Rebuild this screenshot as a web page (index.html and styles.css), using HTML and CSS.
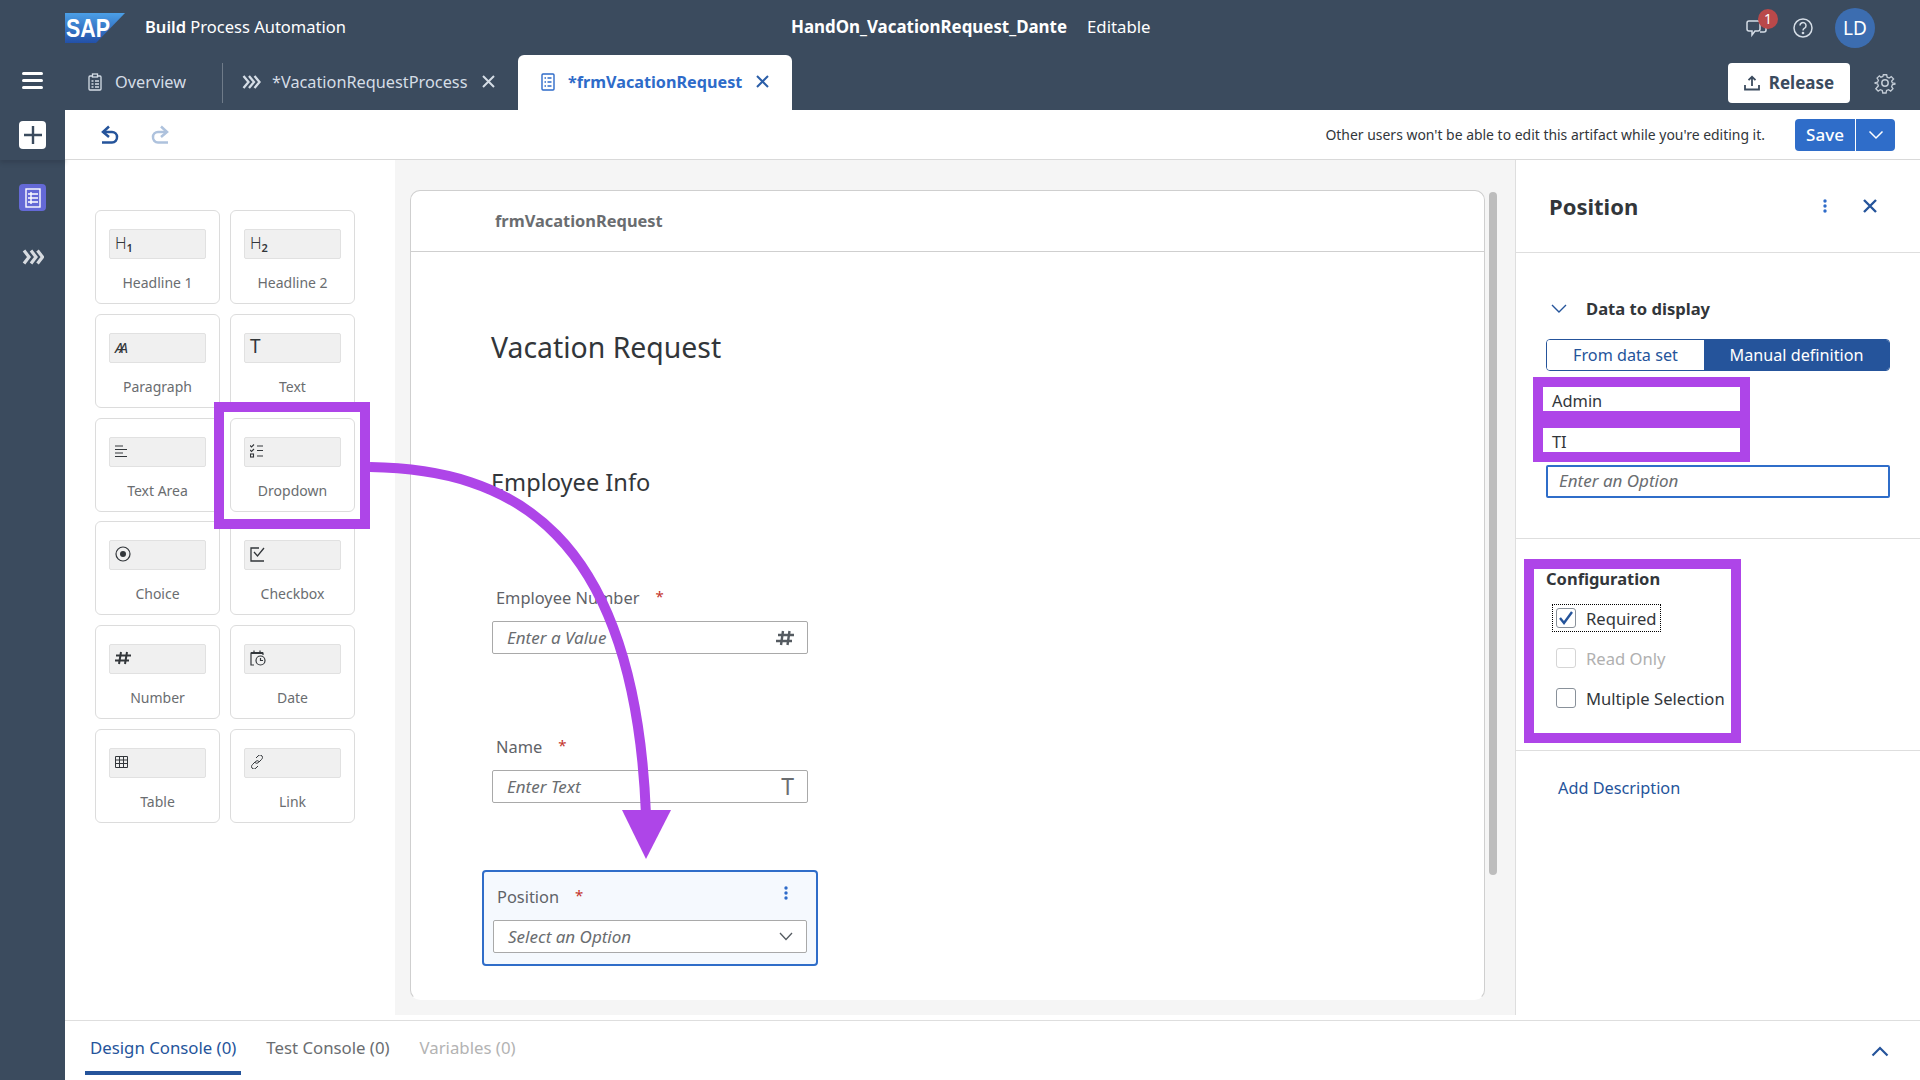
FILE: index.html
```html
<!DOCTYPE html>
<html lang="en">
<head>
<meta charset="utf-8">
<title>Build Process Automation</title>
<link rel="stylesheet" href="styles.css">
</head>
<body>
<div class="app">
  <header class="topbar">
    <div class="brand">
      <svg class="logo" width="60" height="30" viewBox="0 0 60 30">
        <defs><linearGradient id="sapg" x1="0" y1="0" x2="0" y2="1"><stop offset="0" stop-color="#4b9fe6"/><stop offset="1" stop-color="#2350a8"/></linearGradient></defs>
        <polygon points="0,0 60,0 31,30 0,30" fill="url(#sapg)"/>
        <text x="1" y="24" class="logo-text" textLength="44" lengthAdjust="spacingAndGlyphs">SAP</text>
      </svg>
      <span class="product"><b>Build</b> Process Automation</span>
    </div>
    <div class="doc-title"><b>HandOn_VacationRequest_Dante</b><span>Editable</span></div>
    <div class="top-actions">
      <span class="chat">
        <svg width="22" height="20" viewBox="0 0 22 20" fill="none" stroke="#d5dde6" stroke-width="1.5"><path d="M3 3h9a2 2 0 0 1 2 2v6a2 2 0 0 1-2 2H9l-3 4v-4H3a2 2 0 0 1-2-2V5a2 2 0 0 1 2-2z"/><path d="M14 6h4a2 2 0 0 1 2 2v4a2 2 0 0 1-2 2h-4"/></svg>
        <span class="badge">1</span>
      </span>
      <svg width="20" height="20" viewBox="0 0 20 20" fill="none" stroke="#d5dde6" stroke-width="1.5"><circle cx="10" cy="10" r="9"/><path d="M7 7.6a3 3 0 1 1 4.6 2.5c-1 .6-1.6 1.2-1.6 2.4"/><circle cx="10" cy="15" r=".6"/></svg>
      <span class="avatar">LD</span>
    </div>
  </header>

  <nav class="tabbar">
    <button class="burger" aria-label="Menu"><i></i><i></i><i></i></button>
    <div class="tabs">
      <div class="tab first">
        <svg width="14" height="18" viewBox="0 0 14 18" fill="none" stroke="#d5dde6" stroke-width="1.3"><rect x="1" y="3" width="12" height="14" rx="1"/><rect x="4.5" y="1" width="5" height="3" fill="#3b4b5e"/><path d="M3.5 8h2M7 8h4M3.5 11h2M7 11h4M3.5 14h2M7 14h4"/></svg>
        <span>Overview</span>
      </div>
      <span class="tab-sep"></span>
      <div class="tab second">
        <svg width="19" height="14" viewBox="0 0 19 14" fill="none" stroke="#d5dde6" stroke-width="2.3"><path d="M1.500 1l5 6-5 6M7 1l5 6-5 6M12.500 1l5 6-5 6"/></svg>
        <span>*VacationRequestProcess</span>
        <svg class="tab-x" width="13" height="13" viewBox="0 0 13 13" stroke="#d5dde6" stroke-width="2"><path d="M1 1l11 11M12 1L1 12"/></svg>
      </div>
      <div class="tab active">
        <svg width="14" height="18" viewBox="0 0 14 18" fill="none" stroke="#2e6bc9" stroke-width="1.400"><rect x="1" y="1" width="12" height="16" rx="1"/><path d="M3.500 5h1.500M6.500 5h4M3.500 9h1.500M6.500 9h4M3.500 13h1.500M6.500 13h4"/></svg>
        <span>*frmVacationRequest</span>
        <svg class="tab-x" width="13" height="13" viewBox="0 0 13 13" stroke="#2b5ea8" stroke-width="2"><path d="M1 1l11 11M12 1L1 12"/></svg>
      </div>
    </div>
    <div class="tab-actions">
      <button class="release">
        <svg width="16" height="16" viewBox="0 0 16 16" fill="none" stroke="#3b4b5e" stroke-width="1.800"><path d="M8 11V2M4.500 5.200L8 1.800l3.500 3.400M1 10v4.500h14V10"/></svg>
        Release
      </button>
      <svg width="22" height="22" viewBox="0 0 24 24" fill="none" stroke="#c3ccd6" stroke-width="1.600"><circle cx="12" cy="12" r="3.500"/><path d="M10 2h4l.6 3 2.400 1 2.600-1.700 2.800 2.800L20 9.700l1 2.300 3 .6v-1 1.800l-3 .6-1 2.400 1.700 2.600-2.800 2.800-2.600-1.700-2.400 1-.6 3h-4l-.6-3-2.400-1-2.600 1.700-2.800-2.800L4 15.400l-1-2.400-3-.6v-.8l3-.6 1-2.300-1.600-2.600 2.800-2.800L7 5l2.400-1z" transform="translate(1.200 1.200) scale(.9)"/></svg>
    </div>
  </nav>

  <div class="main">
    <aside class="rail">
      <div class="rail-top">
        <button class="rail-add" aria-label="Add">
          <svg width="20" height="20" viewBox="0 0 20 20" stroke="#3b4b5e" stroke-width="2.400"><path d="M10 1v18M1 10h18"/></svg>
        </button>
      </div>
      <button class="rail-form" aria-label="Forms">
        <svg width="16" height="20" viewBox="0 0 16 20" fill="none" stroke="#fff" stroke-width="1.400"><rect x="1" y="1" width="14" height="18"/><path d="M3 6h10M3 10h10M3 14h10M6 4v12"/></svg>
      </button>
      <button class="rail-proc" aria-label="Processes">
        <svg width="22" height="16" viewBox="0 0 22 16" fill="none" stroke="#d7dbe0" stroke-width="3.200"><path d="M2 1.500l5 6.500-5 6.500M9 1.500l5 6.500-5 6.500M15.500 1.500l5 6.500-5 6.500"/></svg>
      </button>
    </aside>

    <div class="workspace">
      <div class="toolbar">
        <svg class="undo" width="20" height="20" viewBox="0 0 20 20" fill="none" stroke="#25549b" stroke-width="2.500"><path d="M9 1.500L3 7l6 5"/><path d="M3 7h9a5 5 0 0 1 5 5v0a5 5 0 0 1-5 5.500H2"/></svg>
        <svg class="redo" width="20" height="20" viewBox="0 0 20 20" fill="none" stroke="#aec2dd" stroke-width="2.500"><path d="M11 1.500L17 7l-6 5"/><path d="M17 7H8a5 5 0 0 0-5 5v0a5 5 0 0 0 5 5.500h10"/></svg>
        <span class="notice">Other users won't be able to edit this artifact while you're editing it.</span>
        <div class="save">
          <span class="save-main">Save</span>
          <span class="save-drop"><svg width="16" height="10" viewBox="0 0 16 10" fill="none" stroke="#fff" stroke-width="1.500"><path d="M1.500 1.500L8 8l6.500-6.500"/></svg></span>
        </div>
      </div>

      <div class="panes">
        <section class="palette">
          <div class="tile"><div class="tile-field"><span class="ic-h">H<sub>1</sub></span></div><div class="tile-label">Headline 1</div></div>
          <div class="tile"><div class="tile-field"><span class="ic-h">H<sub>2</sub></span></div><div class="tile-label">Headline 2</div></div>
          <div class="tile"><div class="tile-field"><span class="ic-p">AA</span></div><div class="tile-label">Paragraph</div></div>
          <div class="tile"><div class="tile-field"><span class="ic-t">T</span></div><div class="tile-label">Text</div></div>
          <div class="tile"><div class="tile-field"><svg width="12" height="12" viewBox="0 0 12 12" stroke="#32363a" stroke-width="1.100"><path d="M0 1h8M0 4.500h12M0 8h8M0 11.500h12"/></svg></div><div class="tile-label">Text Area</div></div>
          <div class="tile marked"><div class="tile-field"><svg width="14" height="14" viewBox="0 0 14 14" fill="none" stroke="#32363a" stroke-width="1.100"><path d="M0 1.500l1.500 1.500L4 .5M0 6l1.500 1.500L4 5M7 2h6M7 6.500h6M7 12h6"/><rect x=".5" y="10" width="3" height="3"/></svg></div><div class="tile-label">Dropdown</div></div>
          <div class="tile"><div class="tile-field"><svg width="16" height="16" viewBox="0 0 16 16" fill="none" stroke="#32363a" stroke-width="1.200"><circle cx="8" cy="8" r="7"/><circle cx="8" cy="8" r="3" fill="#32363a" stroke="none"/></svg></div><div class="tile-label">Choice</div></div>
          <div class="tile"><div class="tile-field"><svg width="15" height="15" viewBox="0 0 15 15" fill="none" stroke="#32363a" stroke-width="1.300"><path d="M14 14H1V1h8"/><path d="M4 5l3.500 4L14 1"/></svg></div><div class="tile-label">Checkbox</div></div>
          <div class="tile"><div class="tile-field"><svg width="16" height="14" viewBox="0 0 16 14" stroke="#32363a" stroke-width="2"><path d="M6 1L4 13M12 1l-2 12M1 4.500h15M0 9.500h14"/></svg></div><div class="tile-label">Number</div></div>
          <div class="tile"><div class="tile-field"><svg width="16" height="16" viewBox="0 0 16 16" fill="none" stroke="#32363a" stroke-width="1.200"><path d="M4 15H1V3h12v2"/><path d="M1 3h12" stroke-width="2"/><path d="M4 .5v3M10 .5v3"/><circle cx="10.500" cy="10.500" r="4.500"/><path d="M10.500 8v2.500H13"/></svg></div><div class="tile-label">Date</div></div>
          <div class="tile"><div class="tile-field"><svg width="13" height="12" viewBox="0 0 13 12" fill="none" stroke="#32363a" stroke-width="1"><path d="M.5.500h12v11H.5zM.5 4h12M.5 7.500h12M4.500.500v11M8.500.500v11"/></svg></div><div class="tile-label">Table</div></div>
          <div class="tile"><div class="tile-field"><svg width="14" height="14" viewBox="0 0 14 14" fill="none" stroke="#32363a" stroke-width="1"><path d="M6 3l2-2a2.500 2.500 0 0 1 4.500 1.500c0 1-1 2-1.500 2.500L8.500 7.500a2.500 2.500 0 0 1-3.500 0"/><path d="M8 11l-2 2a2.500 2.500 0 0 1-4.500-1.500c0-1 1-2 1.500-2.500l2.500-2.500a2.500 2.500 0 0 1 3.500 0"/></svg></div><div class="tile-label">Link</div></div>
        </section>

        <section class="canvas">
          <div class="card">
            <div class="card-head">frmVacationRequest</div>
            <div class="form">
              <h1 class="form-title">Vacation Request</h1>
              <h2 class="form-section">Employee Info</h2>
              <div class="field field-a">
                <div class="field-label"><span>Employee Number</span><em>*</em></div>
                <div class="input"><span>Enter a Value</span>
                  <svg width="18" height="16" viewBox="0 0 18 16" stroke="#555b61" stroke-width="2.400"><path d="M7 1L5 15M13.500 1l-2 14M2 5h16M0 11h16"/></svg>
                </div>
              </div>
              <div class="field field-b">
                <div class="field-label"><span>Name</span><em>*</em></div>
                <div class="input"><span>Enter Text</span><span class="input-t">T</span></div>
              </div>
              <div class="selected">
                <div class="field-label"><span>Position</span><em>*</em>
                  <svg class="kebab" width="4" height="14" viewBox="0 0 4 14" fill="#2e6bc9"><circle cx="2" cy="2" r="1.700"/><circle cx="2" cy="7" r="1.700"/><circle cx="2" cy="12" r="1.700"/></svg>
                </div>
                <div class="input select"><span>Select an Option</span>
                  <svg width="14" height="9" viewBox="0 0 14 9" fill="none" stroke="#555b61" stroke-width="1.300"><path d="M1 1l6 6.500L13 1"/></svg>
                </div>
              </div>
            </div>
          </div>
          <div class="scroll-thumb"></div>
        </section>

        <aside class="props">
          <div class="props-head">
            <h2>Position</h2>
            <svg class="kebab-r" width="4" height="14" viewBox="0 0 4 14" fill="#2e6bc9"><circle cx="2" cy="2" r="1.700"/><circle cx="2" cy="7" r="1.700"/><circle cx="2" cy="12" r="1.700"/></svg>
            <svg width="14" height="14" viewBox="0 0 14 14" stroke="#25549b" stroke-width="2.400"><path d="M1 1l12 12M13 1L1 13"/></svg>
          </div>
          <div class="props-data">
            <div class="data-title">
              <svg width="16" height="9" viewBox="0 0 16 9" fill="none" stroke="#25549b" stroke-width="1.400"><path d="M1 1l7 7 7-7"/></svg>
              <span>Data to display</span>
            </div>
            <div class="toggle"><span class="toggle-off">From data set</span><span class="toggle-on">Manual definition</span></div>
            <div class="options">
              <div class="option">Admin</div>
              <div class="option">TI</div>
            </div>
            <div class="opt-input">Enter an Option</div>
          </div>
          <div class="props-config">
            <div class="config-box">
              <div class="config-title">Configuration</div>
              <label class="check focus"><span class="box">
                <svg width="16" height="14" viewBox="0 0 16 14" fill="none" stroke="#25549b" stroke-width="2.400"><path d="M2 7l4 5 8-11"/></svg>
              </span><span>Required</span></label>
              <label class="check disabled"><span class="box"></span><span>Read Only</span></label>
              <label class="check"><span class="box"></span><span>Multiple Selection</span></label>
            </div>
          </div>
          <a class="add-desc">Add Description</a>
        </aside>
      </div>

      <footer class="console">
        <span class="con-tab on">Design Console (0)</span>
        <span class="con-tab">Test Console (0)</span>
        <span class="con-tab off">Variables (0)</span>
        <svg class="con-up" width="18" height="11" viewBox="0 0 18 11" fill="none" stroke="#25549b" stroke-width="2.200"><path d="M1.500 9.500L9 2l7.500 7.500"/></svg>
      </footer>
    </div>
  </div>

  <svg class="arrow" width="1920" height="1080" viewBox="0 0 1920 1080">
    <path d="M370 467C510 469 635 530 646 815" fill="none" stroke="#ae45e8" stroke-width="10"/>
    <polygon points="622,810 671,810 646,859" fill="#ae45e8"/>
  </svg>
</div>
</body>
</html>
```
FILE: styles.css
```css
* { box-sizing: border-box; }
html, body { margin: 0; height: 100%; }
body { font-family: "Noto Sans", "Open Sans", sans-serif; font-size: 14px; color: #32363a; background: #fff; overflow: hidden; }
button { border: 0; padding: 0; background: none; font: inherit; }
svg { display: block; flex: none; }

.app { position: relative; width: 1920px; height: 1080px; display: flex; flex-direction: column; }

/* header */
.topbar { height: 55px; background: #3b4b5e; color: #fff; display: flex; align-items: center; padding-left: 65px; font-size: 16.500px; }
.brand { display: flex; align-items: center; gap: 20px; width: 726px; }
.logo { margin-top: 1px; }
.product { padding-bottom: 2px; }
.logo-text { font-family: "Liberation Sans", sans-serif; font-weight: 700; font-size: 26px; fill: #fff; }
.product b { font-weight: 600; }
.doc-title b { font-weight: 700; font-size: 16.900px; }
.doc-title { display: flex; gap: 20px; padding-bottom: 2px; font-size: 16.800px; align-items: baseline; }
.top-actions { flex: 1; display: flex; align-items: center; justify-content: flex-end; padding-right: 45px; }
.chat { position: relative; margin-right: 25px; }
.badge { position: absolute; top: -9px; left: 12px; width: 20px; height: 20px; border-radius: 50%; background: #b9494a; color: #fff; font-size: 14px; line-height: 20px; text-align: center; }
.avatar { width: 40px; height: 40px; border-radius: 50%; margin-left: 22px; background: #3c6db0; font-size: 19px; line-height: 40px; text-align: center; color: #fff; }

.tabbar { height: 55px; background: #3b4b5e; display: flex; align-items: stretch; position: relative; }
.burger { width: 65px; display: flex; flex-direction: column; justify-content: center; align-items: center; gap: 4px; padding-bottom: 4px; }
.burger i { display: block; width: 21px; height: 3px; border-radius: 2px; background: #fff; }
.tabs { display: flex; align-items: stretch; flex: 1; }
.tab { display: flex; align-items: center; font-size: 16.300px; color: #d5dde6; padding-bottom: 2px; }
.tab.first { padding-left: 23px; width: 157px; gap: 13px; }
.tab-sep { width: 1px; height: 40px; margin-top: 8px; background: #6f7b89; }
.tab.second { padding-left: 19px; width: 295px; gap: 11px; }
.tab.second .tab-x { margin-left: 4px; }
.tab.active .tab-x { margin-left: 1px; }
.tab.active { width: 274px; padding-left: 23px; gap: 13px; background: #fff; color: #2e6bc9; font-weight: 700; font-size: 16.200px; border-radius: 6px 6px 0 0; }
.tab-actions { display: flex; align-items: center; padding: 0 24px 0 0; gap: 24px; }
.release { width: 122px; height: 40px; background: #fff; color: #3b4b5e; border-radius: 4px; font-size: 17px; font-weight: 700; display: flex; align-items: center; justify-content: center; gap: 9px; }

/* main */
.main { flex: 1; display: flex; min-height: 0; }
.rail { width: 65px; background: #3b4b5e; display: flex; flex-direction: column; align-items: center; }
.rail-top { width: 100%; height: 50px; display: flex; justify-content: center; padding-top: 11px; box-shadow: 0 3px 4px rgba(30, 40, 50, .25); }
.rail-add { width: 27px; height: 28px; background: #fff; border-radius: 4px; display: flex; align-items: center; justify-content: center; }
.rail-form { width: 27px; height: 27px; margin-top: 24px; background: #6469d6; border-radius: 4px; display: flex; align-items: center; justify-content: center; }
.rail-proc { margin-top: 38px; }

.workspace { flex: 1; display: flex; flex-direction: column; min-width: 0; }
.toolbar { height: 50px; border-bottom: 1px solid #d9d9d9; display: flex; align-items: center; padding: 0 25px 0 35px; background: #fff; }
.undo { margin-right: 30px; }
.notice { margin-left: auto; margin-right: 30px; font-size: 13.950px; color: #32363a; }
.save { display: flex; height: 32px; border-radius: 4px; overflow: hidden; background: #2f6dc9; color: #fff; font-size: 17px; font-weight: 500; }
.save-main { width: 61px; line-height: 32px; text-align: center; border-right: 1px solid #fff; }
.save-drop { width: 39px; display: flex; align-items: center; justify-content: center; }

.panes { height: 855px; display: flex; }

/* palette */
.palette { width: 330px; padding: 50px 30px 0; display: grid; grid-template-columns: 125px 125px; grid-auto-rows: 94px; gap: 9.750px 10px; align-content: start; }
.tile { position: relative; border: 1px solid #dcdcdc; border-radius: 6px; padding: 18px 13px 0; background: #fff; }
.tile-field { width: 97px; height: 30px; background: #f0f0f0; border: 1px solid #e1e1e1; border-radius: 2px; display: flex; align-items: center; padding: 0 0 2px 5px; color: #32363a; }
.tile-label { margin-top: 14px; text-align: center; color: #6a6d70; font-size: 14px; line-height: 20px; }
.marked { z-index: 2; }
.marked::after { content: ""; position: absolute; left: -17px; right: -16px; top: -17px; bottom: -18px; border: 10px solid #ae45e8; }
.ic-h { font-size: 16px; line-height: 1; font-weight: 300; }
.ic-h sub { font-size: 11px; font-weight: 600; vertical-align: -3px; line-height: 0; }
.ic-p { font-style: italic; font-size: 15px; letter-spacing: -4px; }
.ic-t { font-size: 19px; line-height: 1; }

/* canvas */
.canvas { width: 1120px; background: #f5f5f5; padding: 30px 0 15px 15px; display: flex; align-items: flex-start; gap: 4px; }
.card { width: 1075px; height: 810px; background: #fff; border: 1px solid #cfcfcf; border-bottom-color: transparent; border-radius: 10px; overflow: hidden; }
.card-head { height: 61px; border-bottom: 1px solid #cfcfcf; padding-left: 84px; font-size: 16.400px; font-weight: 700; color: #6a6d70; line-height: 59px; }
.scroll-thumb { width: 8px; height: 683px; margin-top: 2px; background: #bdbdbd; border-radius: 4px; }
.form { padding: 75px 0 0 80px; }
.form-title { margin: 0; font-size: 28.400px; font-weight: 400; line-height: 40px; color: #32363a; }
.form-section { margin: 95px 0 0; font-size: 23.600px; font-weight: 400; line-height: 40px; color: #32363a; }
.field { margin-left: 1px; width: 316px; }
.field-a { margin-top: 86px; }
.field-b { margin-top: 83px; }
.field-label { position: relative; height: 20px; line-height: 20px; padding-left: 4px; font-size: 16.400px; color: #5f6368; display: flex; }
.field-label em { color: #c4342c; font-style: normal; margin-left: 16px; font-size: 15px; line-height: 17px; }
.input { margin-top: 13px; height: 33px; border: 1px solid #a9a9a9; border-radius: 2px; background: #fff; display: flex; align-items: center; justify-content: space-between; padding: 0 13px 0 14px; font-size: 17px; font-style: italic; color: #6a6d70; }
.input-t { font-style: normal; font-size: 23px; line-height: 1; }
.selected { margin: 67px 0 0 -9px; width: 336px; height: 96px; padding: 15px 9px 0; border: 2px solid #2f6dc9; border-radius: 4px; background: #f5f9fe; }
.kebab { position: absolute; right: 19px; top: -1px; }

/* properties */
.props { flex: 1; border-left: 1px solid #dedede; background: #fff; }
.props-head { height: 93px; border-bottom: 1px solid #dedede; display: flex; align-items: center; padding: 0 43px 0 33px; }
.props-head h2 { margin: 0 auto 0 0; font-size: 22px; font-weight: 700; color: #32363a; }
.kebab-r { margin-right: 36px; }
.props-data { height: 286px; padding: 45px 0 0 30px; border-bottom: 1px solid #dedede; }
.data-title { display: flex; align-items: center; gap: 19px; padding-left: 5px; height: 20px; font-size: 16.600px; font-weight: 700; color: #32363a; }
.toggle { margin-top: 21px; width: 344px; height: 32px; display: flex; border-radius: 4px; overflow: hidden; border: 1px solid #25549b; font-size: 16.200px; line-height: 30px; text-align: center; }
.toggle-off { width: 157px; color: #25549b; background: #fff; }
.toggle-on { flex: 1; color: #fff; background: #25549b; }
.options { margin: 6px 0 0 -13px; width: 217px; height: 85px; background: #ae45e8; padding: 10px; display: flex; flex-direction: column; gap: 17px; }
.option { height: 24px; background: #fff; padding: 2px 0 0 9px; font-size: 16.400px; line-height: 24px; color: #32363a; }
.opt-input { margin-top: 3px; width: 344px; height: 33px; border: 2px solid #2f6dc9; border-radius: 2px; padding-left: 11px; font-size: 17px; font-style: italic; line-height: 28px; color: #6a6d70; }
.props-config { height: 212px; padding: 20px 0 0 8px; border-bottom: 1px solid #dedede; }
.config-box { width: 217px; height: 184px; border: 10px solid #ae45e8; padding: 0 0 0 12px; }
.config-title { font-size: 16.500px; font-weight: 700; line-height: 20px; color: #32363a; }
.check { display: flex; align-items: center; gap: 10px; height: 28px; margin-top: 12px; margin-left: 6px; width: max-content; padding: 0 4px; font-size: 16.600px; color: #32363a; white-space: nowrap; }
.check.focus { margin-top: 15px; }
.focus { outline: 1px dotted #000; outline-offset: -1px; }
.box { width: 20px; height: 20px; border: 1px solid #89919a; border-radius: 3px; background: #fff; display: flex; align-items: center; justify-content: center; }
.disabled { color: #b0b0b0; }
.disabled .box { border-color: #d5d5d5; }
.add-desc { display: block; padding: 26px 0 0 42px; font-size: 16.300px; line-height: 22px; color: #25549b; }

/* console */
.console { flex: 1; margin-top: 5px; border-top: 1px solid #dedede; background: #fff; display: flex; align-items: flex-start; padding-left: 20px; font-size: 16.800px; position: relative; }
.con-tab { padding: 15px 5px 0; height: 54px; line-height: 24px; margin-right: 20px; color: #6a6d70; white-space: nowrap; }
.con-tab.on { color: #25549b; border-bottom: 4px solid #25549b; border-radius: 3px 3px 0 0; margin-right: 20px; }
.con-tab.off { color: #b3b3b3; }
.con-up { margin: 25px 0 0 auto; margin-right: 31px; }

/* annotation overlay */
.arrow { position: absolute; left: 0; top: 0; pointer-events: none; }
```
